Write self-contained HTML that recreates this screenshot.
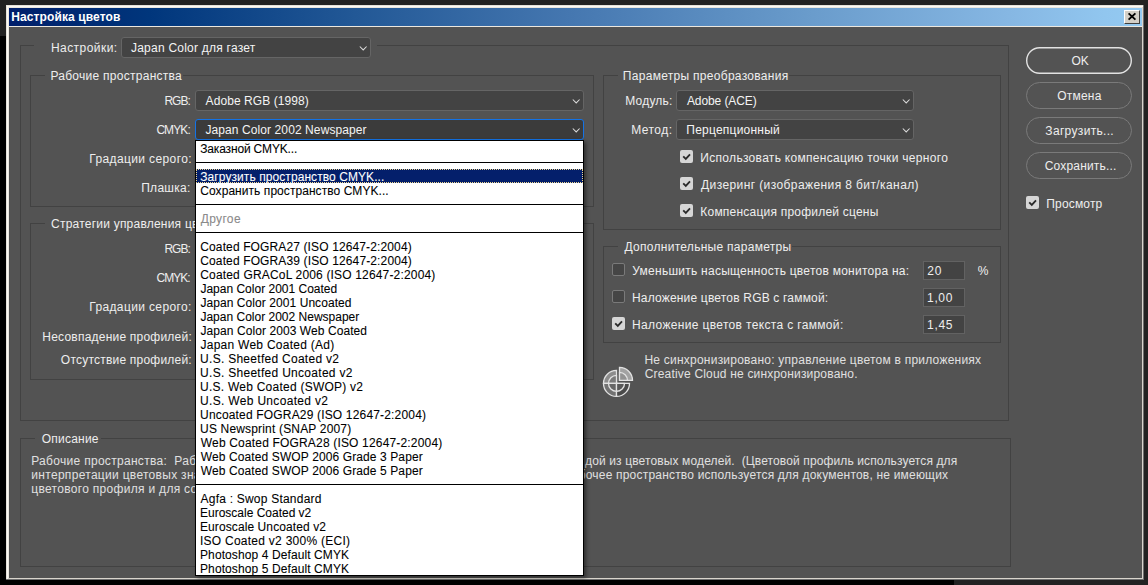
<!DOCTYPE html>
<html><head><meta charset="utf-8">
<style>
*{margin:0;padding:0;box-sizing:border-box}
html,body{width:1148px;height:585px;overflow:hidden;background:#222;font-family:"Liberation Sans",sans-serif;font-size:12px}
.a{position:absolute}
.t{position:absolute;white-space:pre;line-height:14px;color:#eee}
#win{position:absolute;left:6px;top:5px;width:1138px;height:575px;background:#ece8e0;border-right:1px solid #6e6e6e;border-bottom:1px solid #6e6e6e;box-shadow:inset 1px 1px 0 #e6e2da,inset 2px 2px 0 #fcfaf5,inset -1px -1px 0 #d8d4cc}
#title{position:absolute;left:9px;top:8px;width:1133px;height:18px;background:linear-gradient(to right,#001d6a 0%,#001f6b 0.3%,#00367c 12.4%,#225896 30.5%,#4577b0 49.5%,#699bcb 70.3%,#86b7e3 88.3%,#91c6ef 96.7%,#94caf2 100%)}
#body{position:absolute;left:9px;top:27px;width:1133px;height:551px;background:#535353}
.gln{position:absolute;background:#424242}
.dd{position:absolute;background:#434343;border:1px solid #656565;border-radius:3px;height:21px}
.dd.focus{border-color:#1473e6;background:#3b3b3b}
.chev{position:absolute;right:3px;top:8px}
.cb{position:absolute;width:13px;height:13px;border-radius:2px}
.cbon{background:#d6d6d6}
.cboff{background:#454545;border:1px solid #7a7a7a}
.inp{position:absolute;background:#434343;border:1px solid #626262;width:42px;height:19px}
.btn{position:absolute;left:1026px;width:106px;height:27px;border:1px solid #7c7c7c;border-radius:14px}
.btn.ok{border:2px solid #e4e4e4}
#list{position:absolute;left:195px;top:140px;width:389px;height:436px;background:#fff;border:1px solid #000;box-shadow:2px 2px 4px rgba(0,0,0,.45)}
.li{position:absolute;white-space:pre;line-height:14px;color:#000;-webkit-text-stroke:0.08px currentColor}
.sep{position:absolute;left:0;width:387px;height:1px;background:#000}
</style></head><body>
<div class="a" style="left:0;top:36px;width:954px;height:549px;background:#000"></div>
<div id="win"></div>
<div id="title"></div>
<div class="a" style="left:1124px;top:10px;width:16px;height:14px;background:#d4d0c8;border-top:1px solid #fff;border-left:1px solid #fff;border-right:1px solid #404040;border-bottom:1px solid #404040"><svg width="14" height="12" viewBox="0 0 14 12" style="position:absolute;left:0;top:0"><path d="M3.6 2.4 L10.4 8.6 M10.4 2.4 L3.6 8.6" stroke="#000" stroke-width="1.9"/></svg></div>
<div id="body"></div>
<div class="gln" style="left:20px;top:45px;width:1px;height:376px"></div>
<div class="gln" style="left:1008px;top:45px;width:1px;height:376px"></div>
<div class="gln" style="left:20px;top:420px;width:989px;height:1px"></div>
<div class="gln" style="left:20px;top:45px;width:14px;height:1px"></div>
<div class="gln" style="left:377px;top:45px;width:632px;height:1px"></div>
<div class="gln" style="left:30px;top:75px;width:1px;height:132px"></div>
<div class="gln" style="left:593px;top:75px;width:1px;height:132px"></div>
<div class="gln" style="left:30px;top:206px;width:564px;height:1px"></div>
<div class="gln" style="left:30px;top:75px;width:15px;height:1px"></div>
<div class="gln" style="left:183px;top:75px;width:411px;height:1px"></div>
<div class="gln" style="left:30px;top:223px;width:1px;height:157px"></div>
<div class="gln" style="left:593px;top:223px;width:1px;height:157px"></div>
<div class="gln" style="left:30px;top:379px;width:564px;height:1px"></div>
<div class="gln" style="left:30px;top:223px;width:15px;height:1px"></div>
<div class="gln" style="left:300px;top:223px;width:294px;height:1px"></div>
<div class="gln" style="left:603px;top:75px;width:1px;height:155px"></div>
<div class="gln" style="left:1000px;top:75px;width:1px;height:155px"></div>
<div class="gln" style="left:603px;top:229px;width:398px;height:1px"></div>
<div class="gln" style="left:603px;top:75px;width:15px;height:1px"></div>
<div class="gln" style="left:789px;top:75px;width:212px;height:1px"></div>
<div class="gln" style="left:603px;top:246px;width:1px;height:97px"></div>
<div class="gln" style="left:1000px;top:246px;width:1px;height:97px"></div>
<div class="gln" style="left:603px;top:342px;width:398px;height:1px"></div>
<div class="gln" style="left:603px;top:246px;width:15px;height:1px"></div>
<div class="gln" style="left:792px;top:246px;width:209px;height:1px"></div>
<div class="gln" style="left:20px;top:438px;width:1px;height:129px"></div>
<div class="gln" style="left:1010px;top:438px;width:1px;height:129px"></div>
<div class="gln" style="left:20px;top:566px;width:991px;height:1px"></div>
<div class="gln" style="left:20px;top:438px;width:15px;height:1px"></div>
<div class="gln" style="left:101px;top:438px;width:910px;height:1px"></div>
<div class="dd" style="left:121px;top:37px;width:250px"><svg class="chev" width="8" height="5" viewBox="0 0 8 5"><path d="M0.8 0.5 L4.2 3.9 L7.6 0.5" fill="none" stroke="#dcdcdc" stroke-width="1.05"/></svg></div>
<div class="dd" style="left:195px;top:90px;width:389px"><svg class="chev" width="8" height="5" viewBox="0 0 8 5"><path d="M0.8 0.5 L4.2 3.9 L7.6 0.5" fill="none" stroke="#dcdcdc" stroke-width="1.05"/></svg></div>
<div class="dd focus" style="left:195px;top:119px;width:389px"><svg class="chev" width="8" height="5" viewBox="0 0 8 5"><path d="M0.8 0.5 L4.2 3.9 L7.6 0.5" fill="none" stroke="#dcdcdc" stroke-width="1.05"/></svg></div>
<div class="dd" style="left:676px;top:90px;width:238px"><svg class="chev" width="8" height="5" viewBox="0 0 8 5"><path d="M0.8 0.5 L4.2 3.9 L7.6 0.5" fill="none" stroke="#dcdcdc" stroke-width="1.05"/></svg></div>
<div class="dd" style="left:676px;top:119px;width:238px"><svg class="chev" width="8" height="5" viewBox="0 0 8 5"><path d="M0.8 0.5 L4.2 3.9 L7.6 0.5" fill="none" stroke="#dcdcdc" stroke-width="1.05"/></svg></div>
<div class="cb cbon" style="left:680px;top:150px"><svg width="13" height="13" viewBox="0 0 13 13" style="position:absolute;left:0;top:0"><path d="M3.2 6.3 L5.8 8.9 L10 4.3" fill="none" stroke="#2a2a2a" stroke-width="1.8"/></svg></div>
<div class="cb cbon" style="left:680px;top:177px"><svg width="13" height="13" viewBox="0 0 13 13" style="position:absolute;left:0;top:0"><path d="M3.2 6.3 L5.8 8.9 L10 4.3" fill="none" stroke="#2a2a2a" stroke-width="1.8"/></svg></div>
<div class="cb cbon" style="left:680px;top:204px"><svg width="13" height="13" viewBox="0 0 13 13" style="position:absolute;left:0;top:0"><path d="M3.2 6.3 L5.8 8.9 L10 4.3" fill="none" stroke="#2a2a2a" stroke-width="1.8"/></svg></div>
<div class="cb cboff" style="left:612px;top:263px"></div>
<div class="cb cboff" style="left:612px;top:290px"></div>
<div class="cb cbon" style="left:612px;top:317px"><svg width="13" height="13" viewBox="0 0 13 13" style="position:absolute;left:0;top:0"><path d="M3.2 6.3 L5.8 8.9 L10 4.3" fill="none" stroke="#2a2a2a" stroke-width="1.8"/></svg></div>
<div class="cb cbon" style="left:1026px;top:196px"><svg width="13" height="13" viewBox="0 0 13 13" style="position:absolute;left:0;top:0"><path d="M3.2 6.3 L5.8 8.9 L10 4.3" fill="none" stroke="#2a2a2a" stroke-width="1.8"/></svg></div>
<div class="inp" style="left:923px;top:261px"></div>
<div class="inp" style="left:923px;top:288px"></div>
<div class="inp" style="left:923px;top:315px"></div>
<svg class="a" style="left:1026px;top:47px" width="106" height="27"><rect x="0.7" y="0.7" width="104.6" height="25.6" rx="12.8" fill="none" stroke="#e2e2e2" stroke-width="1.4"/></svg>
<svg class="a" style="left:1026px;top:82px" width="106" height="27"><rect x="0.5" y="0.5" width="105" height="26" rx="13" fill="none" stroke="#7a7a7a" stroke-width="1"/></svg>
<svg class="a" style="left:1026px;top:117px" width="106" height="27"><rect x="0.5" y="0.5" width="105" height="26" rx="13" fill="none" stroke="#7a7a7a" stroke-width="1"/></svg>
<svg class="a" style="left:1026px;top:152px" width="106" height="27"><rect x="0.5" y="0.5" width="105" height="26" rx="13" fill="none" stroke="#7a7a7a" stroke-width="1"/></svg>
<svg class="a" style="left:600px;top:362px" width="36" height="38" viewBox="0 0 36 38">
<g stroke="#e2e2e2" stroke-width="1.3" fill="none">
<path d="M16.5 21.4 L16.5 8.4 A13 13 0 0 0 3.5 21.4 Z" fill="#8c8c8c"/>
<path d="M16.5 21.4 L3.5 21.4 A13 13 0 0 0 16.5 34.4 Z" fill="#727272"/>
<path d="M16.5 21.4 L16.5 34.4 A13 13 0 0 0 29.5 21.4 Z" fill="#4a4a4a"/>
<path d="M16.5 21.4 L16.5 13.4 A8 8 0 0 0 8.5 21.4 Z" fill="#7a7a7a"/>
<path d="M16.5 21.4 L8.5 21.4 A8 8 0 0 0 16.5 29.4 Z" fill="#666"/>
<path d="M16.5 21.4 L16.5 29.4 A8 8 0 0 0 24.5 21.4 Z" fill="#585858"/>
<path d="M19.5 18.4 L19.5 5.4 A13 13 0 0 1 32.5 18.4 Z" fill="#a2a2a2"/>
<path d="M19.5 18.4 L19.5 10.4 A8 8 0 0 1 27.5 18.4 Z" fill="#939393"/>
</g></svg>
<div class="t" style="left:11.23px;top:10px;letter-spacing:0.111px;color:#ffffff;font-weight:bold">Настройка цветов</div>
<div class="t" style="left:50.91px;top:41px;letter-spacing:0.455px;color:#eeeeee">Настройки:</div>
<div class="t" style="left:130.93px;top:41px;letter-spacing:0.239px;color:#f4f4f4">Japan Color для газет</div>
<div class="t" style="left:50.41px;top:69px;letter-spacing:0.269px;color:#eeeeee">Рабочие пространства</div>
<div class="t" style="left:164.41px;top:94px;letter-spacing:-0.985px;color:#eeeeee">RGB:</div>
<div class="t" style="left:205.58px;top:94px;letter-spacing:0.08px;color:#f4f4f4">Adobe RGB (1998)</div>
<div class="t" style="left:156.38px;top:123px;letter-spacing:-0.917px;color:#eeeeee">CMYK:</div>
<div class="t" style="left:205.43px;top:123px;letter-spacing:0.095px;color:#f4f4f4">Japan Color 2002 Newspaper</div>
<div class="t" style="left:89.21px;top:152px;letter-spacing:0.381px;color:#eeeeee">Градации серого:</div>
<div class="t" style="left:141.22px;top:181px;letter-spacing:0.273px;color:#eeeeee">Плашка:</div>
<div class="t" style="left:51.08px;top:217px;letter-spacing:0.22px;color:#eeeeee">Стратегии управления цветом</div>
<div class="t" style="left:164.41px;top:242px;letter-spacing:-0.985px;color:#eeeeee">RGB:</div>
<div class="t" style="left:156.48px;top:271px;letter-spacing:-0.942px;color:#eeeeee">CMYK:</div>
<div class="t" style="left:89.21px;top:300px;letter-spacing:0.368px;color:#eeeeee">Градации серого:</div>
<div class="t" style="left:42.31px;top:330px;letter-spacing:0.218px;color:#eeeeee">Несовпадение профилей:</div>
<div class="t" style="left:60.83px;top:353px;letter-spacing:0.214px;color:#eeeeee">Отсутствие профилей:</div>
<div class="t" style="left:622.82px;top:69px;letter-spacing:0.293px;color:#eeeeee">Параметры преобразования</div>
<div class="t" style="left:625.23px;top:94px;letter-spacing:0.212px;color:#eeeeee">Модуль:</div>
<div class="t" style="left:686.88px;top:94px;letter-spacing:-0.087px;color:#f4f4f4">Adobe (ACE)</div>
<div class="t" style="left:631.13px;top:123px;letter-spacing:0.481px;color:#eeeeee">Метод:</div>
<div class="t" style="left:686.32px;top:123px;letter-spacing:0.229px;color:#f4f4f4">Перцепционный</div>
<div class="t" style="left:700.33px;top:151px;letter-spacing:0.304px;color:#eeeeee">Использовать компенсацию точки черного</div>
<div class="t" style="left:701.01px;top:178px;letter-spacing:0.403px;color:#eeeeee">Дизеринг (изображения 8 бит/канал)</div>
<div class="t" style="left:700.31px;top:205px;letter-spacing:0.215px;color:#eeeeee">Компенсация профилей сцены</div>
<div class="t" style="left:624.51px;top:240px;letter-spacing:0.283px;color:#eeeeee">Дополнительные параметры</div>
<div class="t" style="left:632.29px;top:264px;letter-spacing:0.253px;color:#eeeeee">Уменьшить насыщенность цветов монитора на:</div>
<div class="t" style="left:927.25px;top:264px;letter-spacing:0.869px;color:#eeeeee">20</div>
<div class="t" style="left:977.81px;top:264px;letter-spacing:0.22px;color:#eeeeee">%</div>
<div class="t" style="left:632.01px;top:291px;letter-spacing:0.182px;color:#eeeeee">Наложение цветов RGB с гаммой:</div>
<div class="t" style="left:927.05px;top:291px;letter-spacing:0.656px;color:#eeeeee">1,00</div>
<div class="t" style="left:632.01px;top:318px;letter-spacing:0.342px;color:#eeeeee">Наложение цветов текста с гаммой:</div>
<div class="t" style="left:927.05px;top:318px;letter-spacing:0.683px;color:#eeeeee">1,45</div>
<div class="t" style="left:644.41px;top:353px;letter-spacing:0.231px;color:#e0e0e0">Не синхронизировано: управление цветом в приложениях</div>
<div class="t" style="left:644.68px;top:367px;letter-spacing:0.188px;color:#e0e0e0">Creative Cloud не синхронизировано.</div>
<div class="t" style="left:1071.43px;top:54px;letter-spacing:0px;color:#eeeeee">OK</div>
<div class="t" style="left:1057.33px;top:89px;letter-spacing:0.197px;color:#eeeeee">Отмена</div>
<div class="t" style="left:1045.37px;top:124px;letter-spacing:0.321px;color:#eeeeee">Загрузить...</div>
<div class="t" style="left:1044.78px;top:159px;letter-spacing:0.174px;color:#eeeeee">Сохранить...</div>
<div class="t" style="left:1046.32px;top:197px;letter-spacing:0.162px;color:#eeeeee">Просмотр</div>
<div class="t" style="left:41.73px;top:432px;letter-spacing:0.229px;color:#eeeeee">Описание</div>
<div class="t" style="left:31.21px;top:454px;letter-spacing:0.3px;color:#e0e0e0">Рабочие пространства:  Рабочие пространства задают</div>
<div class="t" style="left:31.33px;top:468px;letter-spacing:0.3px;color:#e0e0e0">интерпретации цветовых значений документа</div>
<div class="t" style="left:31.33px;top:482px;letter-spacing:0.3px;color:#e0e0e0">цветового профиля и для создания</div>
<div class="t" style="left:585.09px;top:454px;letter-spacing:0.125px;color:#e0e0e0">дой из цветовых моделей.  (Цветовой профиль используется для</div>
<div class="t" style="left:578.63px;top:468px;letter-spacing:0.2px;color:#e0e0e0">бочее пространство используется для документов, не имеющих</div>
<div id="list">
<div class="sep" style="top:21px"></div>
<div class="a" style="left:0;top:28px;width:387px;height:14px;background:#041f6b;outline:1px dotted #f0d890;outline-offset:-1px"></div>
<div class="sep" style="top:63px"></div>
<div class="sep" style="top:91px"></div>
<div class="sep" style="top:343px"></div>
<div class="li" style="left:4.27px;top:1px;letter-spacing:-0.165px;color:#000">Заказной CMYK...</div>
<div class="li" style="left:4.27px;top:29px;letter-spacing:0.077px;color:#ffffff;height:13px;overflow:hidden">Загрузить пространство CMYK...</div>
<div class="li" style="left:4.27px;top:43px;letter-spacing:0.059px;color:#000">Сохранить пространство CMYK...</div>
<div class="li" style="left:4.71px;top:71px;letter-spacing:0.345px;color:#8a8a8a">Другое</div>
<div class="li" style="left:4.27px;top:99px;letter-spacing:0.124px;color:#000">Coated FOGRA27 (ISO 12647-2:2004)</div>
<div class="li" style="left:4.27px;top:113px;letter-spacing:0.127px;color:#000">Coated FOGRA39 (ISO 12647-2:2004)</div>
<div class="li" style="left:4.27px;top:127px;letter-spacing:0.167px;color:#000">Coated GRACoL 2006 (ISO 12647-2:2004)</div>
<div class="li" style="left:4.43px;top:141px;letter-spacing:0.001px;color:#000">Japan Color 2001 Coated</div>
<div class="li" style="left:4.43px;top:155px;letter-spacing:0.068px;color:#000">Japan Color 2001 Uncoated</div>
<div class="li" style="left:4.43px;top:169px;letter-spacing:0.003px;color:#000">Japan Color 2002 Newspaper</div>
<div class="li" style="left:4.43px;top:183px;letter-spacing:0.078px;color:#000">Japan Color 2003 Web Coated</div>
<div class="li" style="left:4.43px;top:197px;letter-spacing:0.266px;color:#000">Japan Web Coated (Ad)</div>
<div class="li" style="left:4.09px;top:211px;letter-spacing:0.277px;color:#000">U.S. Sheetfed Coated v2</div>
<div class="li" style="left:4.09px;top:225px;letter-spacing:0.288px;color:#000">U.S. Sheetfed Uncoated v2</div>
<div class="li" style="left:4.09px;top:239px;letter-spacing:0.24px;color:#000">U.S. Web Coated (SWOP) v2</div>
<div class="li" style="left:4.09px;top:253px;letter-spacing:0.315px;color:#000">U.S. Web Uncoated v2</div>
<div class="li" style="left:4.09px;top:267px;letter-spacing:0.17px;color:#000">Uncoated FOGRA29 (ISO 12647-2:2004)</div>
<div class="li" style="left:4.09px;top:281px;letter-spacing:0.17px;color:#000">US Newsprint (SNAP 2007)</div>
<div class="li" style="left:4.81px;top:295px;letter-spacing:0.172px;color:#000">Web Coated FOGRA28 (ISO 12647-2:2004)</div>
<div class="li" style="left:4.81px;top:309px;letter-spacing:0.108px;color:#000">Web Coated SWOP 2006 Grade 3 Paper</div>
<div class="li" style="left:4.81px;top:323px;letter-spacing:0.108px;color:#000">Web Coated SWOP 2006 Grade 5 Paper</div>
<div class="li" style="left:4.58px;top:351px;letter-spacing:0.215px;color:#000">Agfa : Swop Standard</div>
<div class="li" style="left:4.01px;top:365px;letter-spacing:-0.006px;color:#000">Euroscale Coated v2</div>
<div class="li" style="left:4.01px;top:379px;letter-spacing:0.092px;color:#000">Euroscale Uncoated v2</div>
<div class="li" style="left:3.9px;top:393px;letter-spacing:0.264px;color:#000">ISO Coated v2 300% (ECI)</div>
<div class="li" style="left:4.01px;top:407px;letter-spacing:0.099px;color:#000">Photoshop 4 Default CMYK</div>
<div class="li" style="left:4.01px;top:421px;letter-spacing:0.099px;color:#000">Photoshop 5 Default CMYK</div>
</div>
</body></html>
